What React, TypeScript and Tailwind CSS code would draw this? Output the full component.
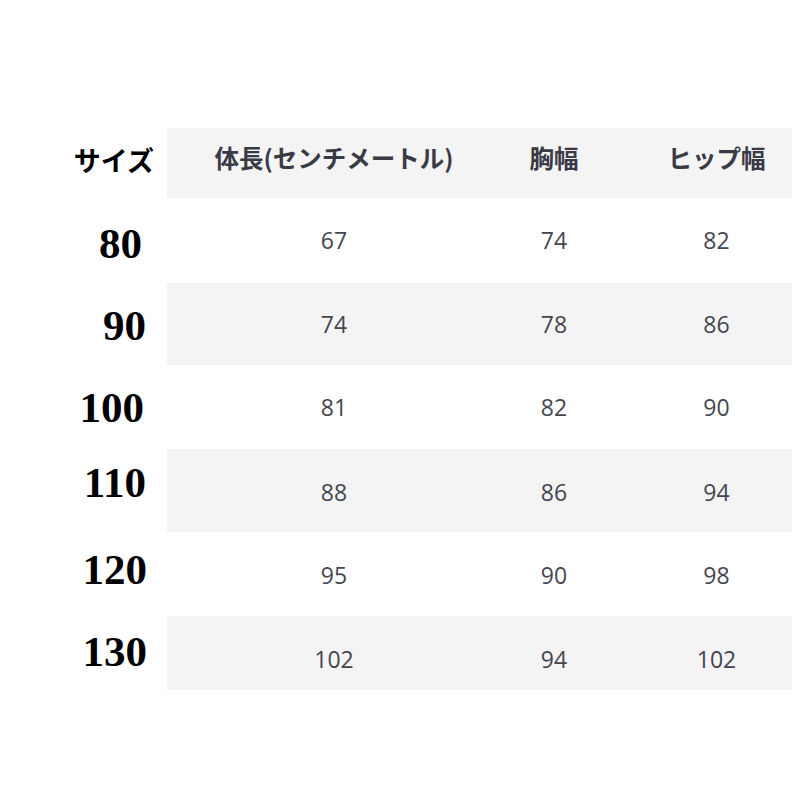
const rows = [
  { size: "80", values: ["67", "74", "82"], h: "h-[85px]", gray: false, nudge: "" },
  { size: "90", values: ["74", "78", "86"], h: "h-[82px]", gray: true, nudge: "" },
  { size: "100", values: ["81", "82", "90"], h: "h-[84px]", gray: false, nudge: "" },
  { size: "110", values: ["88", "86", "94"], h: "h-[83px]", gray: true, nudge: "pt-[3px]" },
  { size: "120", values: ["95", "90", "98"], h: "h-[84px]", gray: false, nudge: "pt-[3px]" },
  { size: "130", values: ["102", "94", "102"], h: "h-[74px]", gray: true, nudge: "pt-[12px]" },
];

const sizeLabelOffset: Record<string, string> = {
  "80": "pr-[25px] pt-[8px]",
  "90": "pr-[21px] pt-[4px]",
  "100": "pr-[23px] pt-[2px]",
  "110": "pr-[21px] pb-[14px]",
  "120": "pr-[20px] pb-[8px]",
  "130": "pr-[20px] pb-[2px]",
};

export default function App() {
  return (
    <div className="h-[809px] w-[809px] bg-white pt-[128px]">
      <div className="flex h-[70px]">
        <div className="flex w-[167px] items-center justify-end pr-[13px] pb-[6px] font-['Noto_Sans_CJK_JP',sans-serif] text-[27px] font-bold text-black">
          サイズ
        </div>
        <div className="flex w-[625px] items-center bg-[#f4f4f5] pb-[10px] font-['Noto_Sans_CJK_JP',sans-serif] text-[24.5px] font-bold text-[#3a3a45]">
          <div className="w-[334px] text-center">体長(センチメートル)</div>
          <div className="w-[106px] text-center">胸幅</div>
          <div className="w-[185px] pl-[34px] text-center">ヒップ幅</div>
        </div>
      </div>

      {rows.map((row) => (
        <div key={row.size} className={`flex ${row.h}`}>
          <div
            className={`flex w-[167px] items-center justify-end font-['Liberation_Serif',serif] text-[43px] font-bold text-black ${sizeLabelOffset[row.size]}`}
          >
            {row.size}
          </div>
          <div
            className={`flex w-[625px] items-center font-['Open_Sans',sans-serif] text-[23px] text-[#45454f] ${
              row.gray ? "bg-[#f4f4f5]" : "bg-white"
            } ${row.nudge}`}
          >
            <div className="w-[334px] text-center">{row.values[0]}</div>
            <div className="w-[106px] text-center">{row.values[1]}</div>
            <div className="w-[185px] pl-[34px] text-center">{row.values[2]}</div>
          </div>
        </div>
      ))}
    </div>
  );
}
